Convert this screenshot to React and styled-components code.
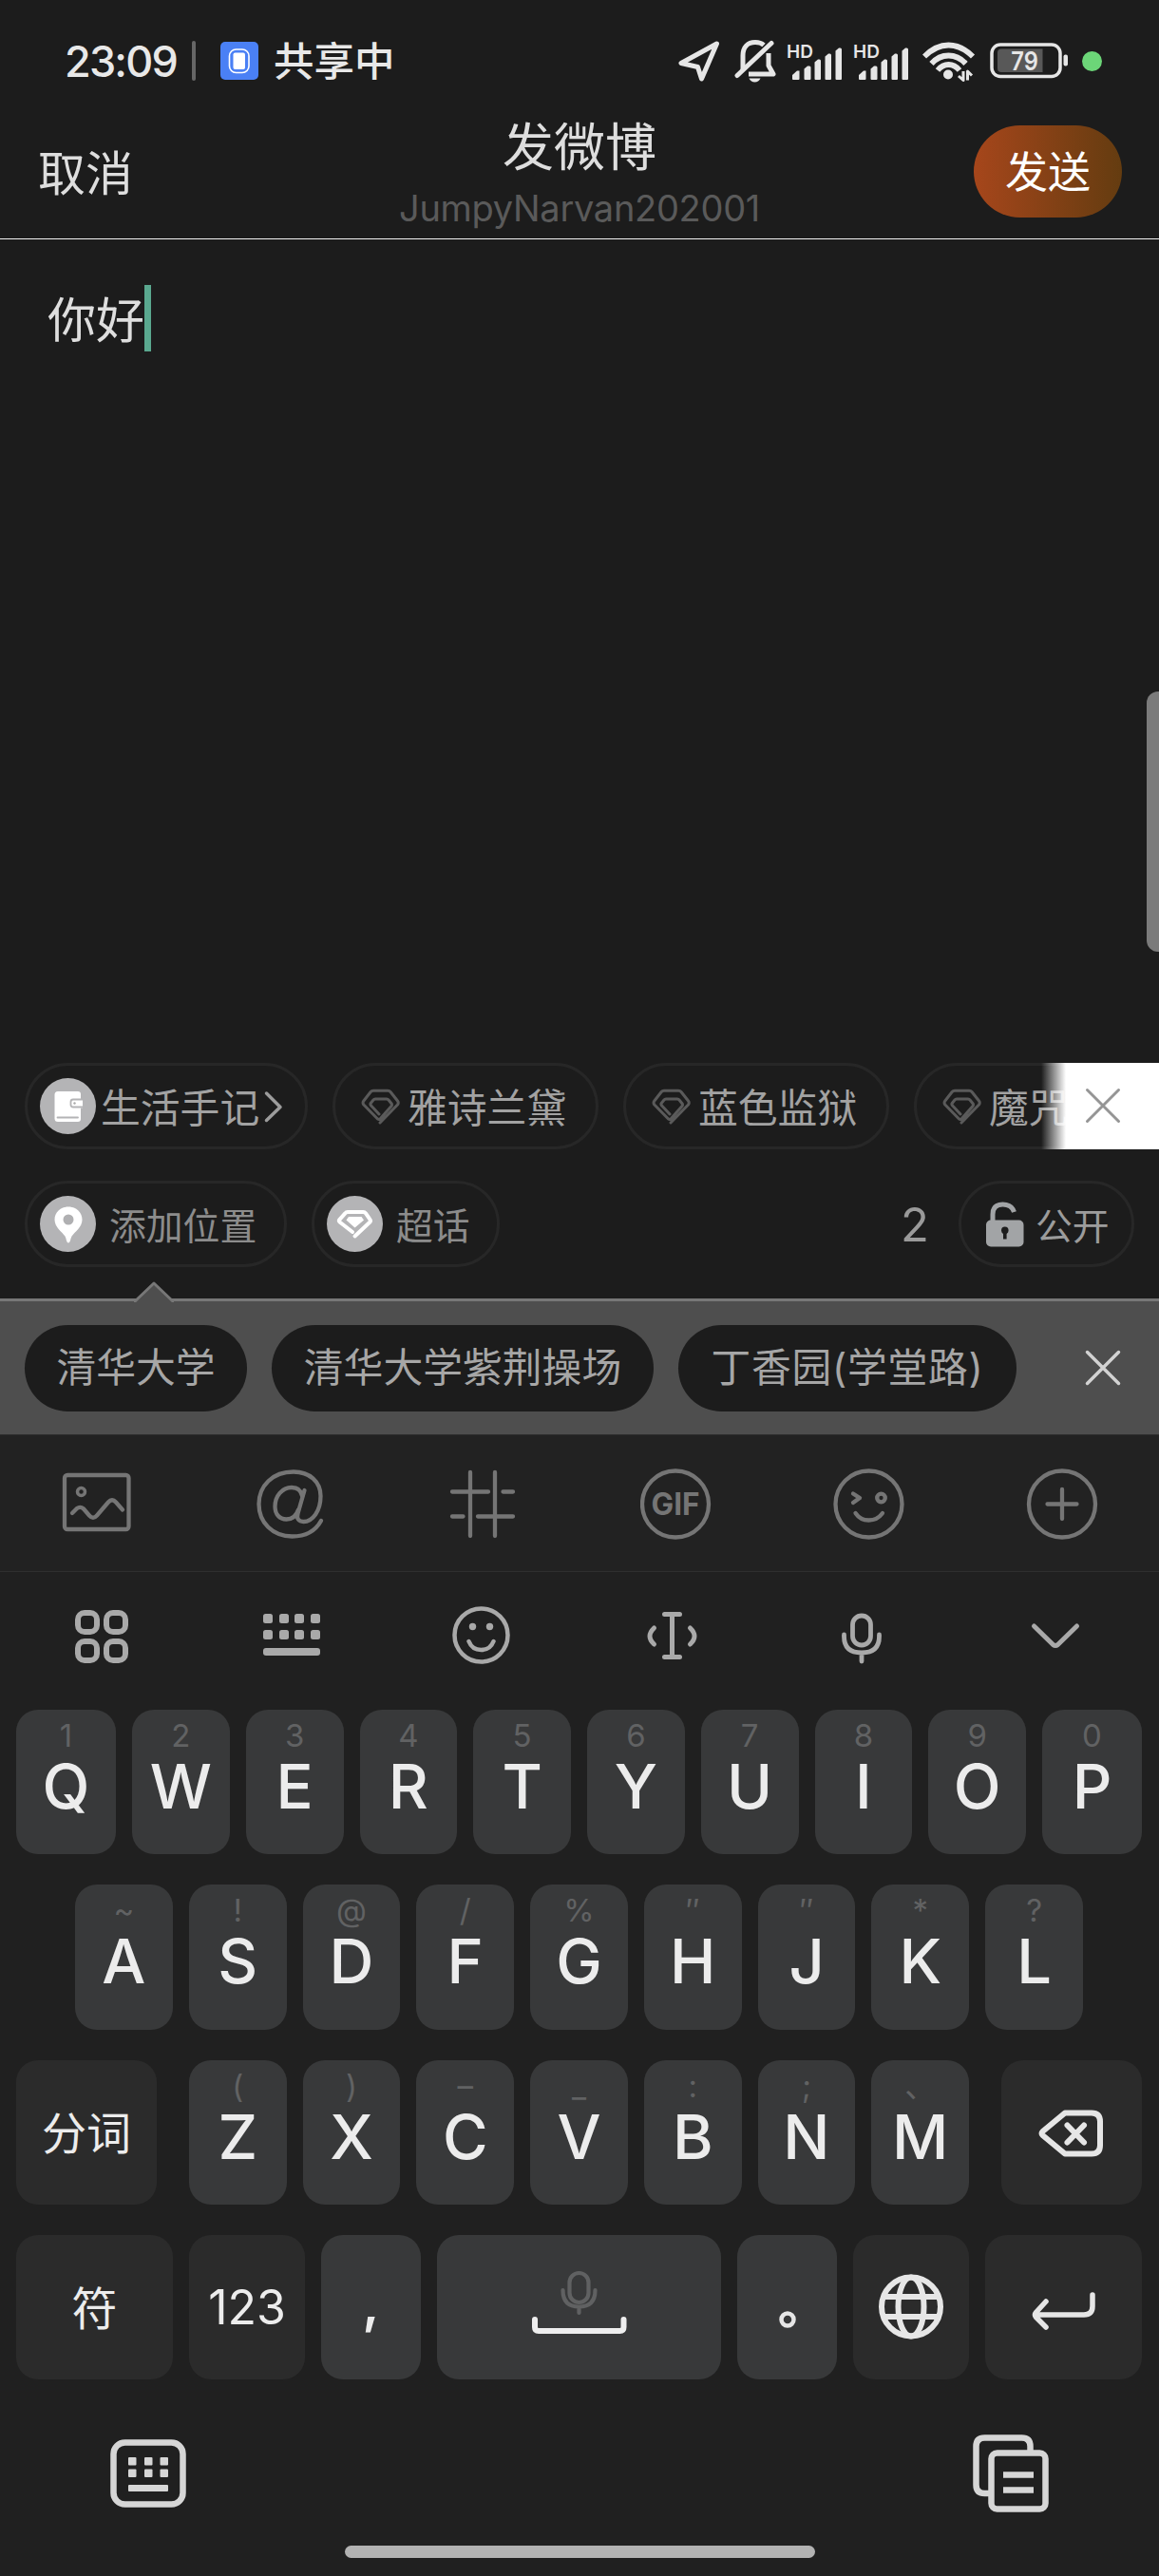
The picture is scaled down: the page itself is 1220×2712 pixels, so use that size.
import React from "react";
import styled, { createGlobalStyle } from "styled-components";

const GlobalStyle = createGlobalStyle`
  * { box-sizing: border-box; }
  body {
    margin: 0;
    background: #1c1c1c;
    font-family: Inter, "Noto Sans CJK SC", sans-serif;
  }
`;

const Screen = styled.main`
  width: 1220px;
  height: 2712px;
  display: flex;
  flex-direction: column;
  overflow: hidden;
  background: #1c1c1c;
  color: #dedede;
  white-space: nowrap;
`;

/* ---------- icons ---------- */

const IconSvg = styled.svg`
  display: block;
  flex: none;
  width: ${(p) => p.$w}px;
  height: ${(p) => p.$h}px;
  fill: none;
  stroke: ${(p) => p.$color || "#e6e6e6"};
  stroke-width: ${(p) => p.$stroke || 5};
  stroke-linecap: round;
  stroke-linejoin: round;
`;

const Icon = ({ w, h, color, stroke, children }) => (
  <IconSvg $w={w} $h={h} $color={color} $stroke={stroke} viewBox={`0 0 ${w} ${h}`}>
    {children}
  </IconSvg>
);

const SvgLabel = styled.text`
  font-family: Inter, sans-serif;
  font-size: ${(p) => p.$size}px;
  font-weight: ${(p) => p.$weight || 500};
  text-anchor: middle;
  fill: ${(p) => p.$color};
  stroke: none;
`;

const LocationArrow = () => (
  <Icon w={44} h={46}>
    <path d="M40.500 5L3 25.500l17.500 4L24.500 42z" />
  </Icon>
);

const BellOff = () => (
  <Icon w={44} h={46}>
    <path d="M9 33V17.500C9 8.500 14 3.500 22 3.500c4 0 7 1.200 9 3" strokeLinecap="butt" />
    <path d="M39 4.500L3 38.500" />
    <path d="M36 15v13l5 9H15" strokeLinecap="butt" />
    <path d="M15.500 41.500h12q-2 4-6 4t-6-4z" fill="#e6e6e6" stroke="none" />
  </Icon>
);

const Signal = () => (
  <Icon w={60} h={42}>
    <SvgLabel x="14" y="18" $size={19} $weight={600} $color="#e6e6e6">HD</SvgLabel>
    <g fill="#e6e6e6" stroke="none">
      <path d="M6 40v-4l5-4.500h2.500V40q0 1-1 1H7q-1 0-1-1z" />
      <path d="M18.500 40V29.500l3.500-3h2q1.500 0 1.500 1.500v12q0 1-1 1h-5q-1 0-1-1z" />
      <path d="M29.500 40V22.500l3.500-3h1.500q1.500 0 1.500 1.500v19q0 1-1 1h-4.500q-1 0-1-1z" />
      <path d="M40.500 40V16.500l3.500-3h1.500q1.500 0 1.500 1.500v25q0 1-1 1h-4.500q-1 0-1-1z" />
      <path d="M51.500 40V10.500l3.500-3h1.500q1.500 0 1.500 1.500v31q0 1-1 1h-4.500q-1 0-1-1z" />
    </g>
  </Icon>
);

const Wifi = () => (
  <Icon w={56} h={44} stroke={5.800}>
    <g strokeLinecap="butt">
      <path d="M2 17.500Q14 5.500 27.500 5.500T53 17.500" />
      <path d="M9.500 25Q17 16.500 27.500 16.500T45.500 25" />
      <path d="M16 32Q21 26 27.500 26T39 32" />
    </g>
    <circle cx="27" cy="36.500" r="5" fill="#e6e6e6" stroke="none" />
    <path d="M43 33v9.500l-5-4.500M47.500 42.500V33l4.500 4.500" strokeWidth="3" strokeLinecap="butt" />
  </Icon>
);

const Battery = () => (
  <Icon w={84} h={38} stroke={3.500}>
    <rect x="2" y="2" width="72" height="33.500" rx="9" />
    <path d="M12 6.500h43.500V31H12q-4 0-4-4V10.500q0-4 4-4z" fill="#585858" stroke="none" />
    <rect x="77.500" y="12.500" width="4.500" height="12" rx="2" fill="#e6e6e6" stroke="none" />
    <SvgLabel x="36.500" y="28.500" textLength="28.500" lengthAdjust="spacingAndGlyphs" $size={27.500} $weight={600} $color="#e6e6e6">79</SvgLabel>
  </Icon>
);

const ShareBadge = () => (
  <Icon w={40} h={40} stroke={1.600} color="#ffffff">
    <rect width="40" height="40" rx="5" fill="#4a80f5" stroke="none" />
    <rect x="9.500" y="8" width="20.500" height="24.500" rx="7" />
    <rect x="13.500" y="11.500" width="12.500" height="17.500" rx="2" fill="#fff" stroke="none" />
  </Icon>
);

const Gem = () => (
  <Icon w={42} h={38} color="#5a5a5a" stroke={3}>
    <path d="M20 36L38.500 17q1.500-2 0-4l-7.500-9.500q-1-1.300-2.800-1.300H13q-1.800 0-2.800 1.300L2.800 13q-1.500 2 0 4l14.700 15q1.500 1 3-.4L32 18.500q1-1.500 0-2.800l-3-3.700q-.8-1-2-1H15q-1.200 0-2 1l-2.600 3.200q-1 1.300 0 2.600L19 27" />
  </Icon>
);

const NotebookIcon = () => (
  <Icon w={59} h={59} stroke={2.500} color="#b4b4b6">
    <path d="M19 14h21q3 0 3 3v5.500h2v9h-2V43q0 3-3 3H19q-3.500 0-3.500-3.500v-25Q15.500 14 19 14z" fill="#fff" stroke="none" />
    <path d="M45 22.500H35q-2.500 0-2.500 2.500v3q0 2.500 2.500 2.500h10M18.500 41.500H40" strokeWidth="1.800" />
    <circle cx="36.500" cy="26.500" r="1.200" fill="#aaa" stroke="none" />
  </Icon>
);

const PinIcon = () => (
  <Icon w={59} h={59}>
    <path d="M30 11.500c8.500 0 14.500 6 14.500 13.500 0 8-7.500 12.500-11 17.500-1.500 3-1.500 7-3.500 7s-2-4-3.500-7C23 37.500 15.500 33 15.500 25c0-7.500 6-13.500 14.500-13.500z" fill="#fff" stroke="none" />
    <circle cx="30" cy="25" r="5.500" fill="#b0b0b2" stroke="none" />
  </Icon>
);

const GemBadgeIcon = () => (
  <Icon w={59} h={59} color="#fff" stroke={4}>
    <path d="M29.500 42.500L45.500 27.500q1-1.300 0-2.600l-4.500-6.500q-1-1.400-2.700-1.400H22q-1.700 0-2.700 1.400l-5.800 6.500q-1.200 1.300 0 2.600L27 38" />
    <path d="M23 22h13.500l2.500 3.500-9.500 8-9-8z" fill="#fff" stroke="none" />
  </Icon>
);

const UnlockIcon = () => (
  <Icon w={42} h={48} color="#a2a4a6">
    <path d="M8 22V13.500Q8 3 18.500 3q9.500 0 12 8" strokeLinecap="butt" />
    <rect x="1" y="19.500" width="39.500" height="28" rx="5" fill="#a2a4a6" stroke="none" />
    <path d="M17 30.500q0-4 3.800-4t3.800 4q0 2-2 3.500v5.500h-3.600V34q-2-1.500-2-3.500z" fill="#1c1c1c" stroke="none" />
  </Icon>
);

const Cross = ({ color, stroke = 3 }) => (
  <Icon w={38} h={38} color={color} stroke={stroke}>
    <path d="M2.500 2.500l33 33M35.500 2.500l-33 33" />
  </Icon>
);

const ImageIcon = () => (
  <Icon w={76} h={76} color="#757575" stroke={4.300}>
    <rect x="4" y="8" width="67.500" height="57" rx="3" />
    <circle cx="21.500" cy="25.500" r="4" strokeWidth="3.500" />
    <path d="M12 48l5-5q3.500-2.500 7 .5l6 7q4 4.500 8 0L50 36.500q4-4.500 8 0L65 44.500" />
  </Icon>
);

const AtIcon = () => (
  <Icon w={76} h={76} color="#757575" stroke={4.300}>
    <path d="M71 56C65 67 54 72.500 40.500 72.500C20 72.500 5.500 58 5.500 38.500S20 4.500 42 4.500C59 4.500 70.500 15 70.500 30C70.500 46 62 57 52.500 57C47.500 57 45 54 46.500 48.500L53.500 24" />
    <path d="M51 30c-1-6-5-9-11-9-10 0-17.500 9-17.500 20 0 8 4.500 13.500 12 13.500 6 0 10.500-4 12.500-10" />
  </Icon>
);

const HashIcon = () => (
  <Icon w={76} h={76} color="#757575" stroke={4.300}>
    <path d="M25 5v67M51 5v67M6 25.500h38M59.500 25.500H70M6 51.500h11.500M33 51.500h37" />
  </Icon>
);

const GifIcon = () => (
  <Icon w={76} h={76} color="#757575" stroke={4.300}>
    <circle cx="37" cy="38.500" r="35" />
    <SvgLabel x="37" y="49.500" textLength="51" lengthAdjust="spacingAndGlyphs" $size={32} $weight={700} $color="#757575">GIF</SvgLabel>
  </Icon>
);

const WinkIcon = () => (
  <Icon w={76} h={76} color="#757575" stroke={4.300}>
    <circle cx="37.500" cy="38.500" r="35" />
    <path d="M21 27.500l7 4.500-7 5M23.500 48q5 7.500 14 7.500T52 48" />
    <circle cx="50.500" cy="32" r="4.300" />
  </Icon>
);

const PlusIcon = () => (
  <Icon w={76} h={76} color="#757575" stroke={4.300}>
    <circle cx="38" cy="38.500" r="35" />
    <path d="M38 23v31M22.500 38.500h31" />
  </Icon>
);

const AppsIcon = () => (
  <Icon w={64} h={64} color="#a9a9a9" stroke={6}>
    <rect x="7" y="7" width="20" height="20" rx="7" />
    <rect x="37" y="7" width="20" height="20" rx="7" />
    <rect x="7" y="37" width="20" height="20" rx="7" />
    <rect x="37" y="37" width="20" height="20" rx="7" />
  </Icon>
);

const KeyboardDots = () => (
  <Icon w={64} h={64}>
    <g fill="#a9a9a9" stroke="none">
      {[8, 25].map((y) => [2, 19, 35, 52].map((x) => (
        <rect key={`${x}-${y}`} x={x} y={y} width="10" height="10" rx="2.500" />
      )))}
      <rect x="2" y="44" width="60" height="8" rx="3" />
    </g>
  </Icon>
);

const SmileIcon = () => (
  <Icon w={64} h={64} color="#a9a9a9" stroke={4.500}>
    <circle cx="31.500" cy="30.500" r="28" />
    <path d="M18.500 37q3.500 9 13 9t13-9" />
    <circle cx="22.500" cy="21.500" r="3.700" fill="#a9a9a9" stroke="none" />
    <circle cx="40.500" cy="21.500" r="3.700" fill="#a9a9a9" stroke="none" />
  </Icon>
);

const CursorMove = () => (
  <Icon w={64} h={64} color="#a9a9a9" stroke={5}>
    <path d="M23.500 8.500h16M23.500 53.500h16M31.500 8.500v45" />
    <path d="M12.500 23q-9 8.500 0 17M50.500 23q9 8.500 0 17" />
  </Icon>
);

const MicIcon = () => (
  <Icon w={64} h={64} color="#a9a9a9" stroke={4.800}>
    <rect x="21.500" y="10" width="19" height="31" rx="9.500" />
    <path d="M12.500 30v2q0 17 18.500 17T49.500 32v-2M31 50v8" />
  </Icon>
);

const ChevronDown = () => (
  <Icon w={64} h={64} color="#a9a9a9" stroke={5}>
    <path d="M12.500 21l20 19.500q2.500 2 5 0L57.500 21" />
  </Icon>
);

const ChevronRight = () => (
  <Icon w={20} h={34} color="#9c9c9c" stroke={3.500}>
    <path d="M2.500 3l14.500 14.500L2.500 31.500" />
  </Icon>
);

const Backspace = () => (
  <Icon w={72} h={52} stroke={6}>
    <path d="M29 5.500h28q9 0 9 9v25q0 9-9 9H29L5.500 29q-2-2 0-4z" />
    <path d="M31.500 18.500l17.500 18M49 18.500L31.500 36.500" />
  </Icon>
);

const SpaceGlyph = () => (
  <Icon w={104} h={80} color="#eeeeee" stroke={6}>
    <g stroke="#606162" strokeWidth="4.200">
      <rect x="41.500" y="4" width="20" height="31" rx="10" />
      <path d="M34.500 22q0 17.500 17 17.500t17-17.500M51.500 41v5" />
    </g>
    <path d="M5 53v8q0 4 4 4h85.500q4 0 4-4v-8" />
  </Icon>
);

const PeriodGlyph = () => (
  <Icon w={20} h={20} stroke={4.500}>
    <circle cx="10" cy="10" r="6.500" />
  </Icon>
);

const GlobeIcon = () => (
  <Icon w={70} h={70} stroke={6}>
    <circle cx="35" cy="34.500" r="31" />
    <ellipse cx="35" cy="34.500" rx="13.500" ry="31" />
    <path d="M7 24h56M7 45h56" strokeLinecap="butt" />
  </Icon>
);

const EnterIcon = () => (
  <Icon w={70} h={42} stroke={5.500}>
    <path d="M65 4v12q0 9-9 9H5M16 11L5.500 22.500q-2 2.500 0 5L16 38" />
  </Icon>
);

const KeyboardSwitch = () => (
  <Icon w={80} h={72} color="#d6d6d6" stroke={6.500}>
    <rect x="3.500" y="3.500" width="73" height="65" rx="12" />
    <g fill="#d6d6d6" stroke="none">
      {[19, 31.500].map((y) => [19, 36, 52.500].map((x) => (
        <rect key={`${x}-${y}`} x={x} y={y} width="8.500" height="8.500" rx="1" />
      )))}
      <rect x="19" y="48" width="42" height="7" rx="1" />
    </g>
  </Icon>
);

const ClipboardIcon = () => (
  <Icon w={80} h={82} color="#d6d6d6" stroke={6.500}>
    <g strokeLinecap="butt">
      <path d="M60.500 18v-5.500q0-9-9-9H12.500q-9 0-9 9v40.500q0 9 9 9H17" />
      <rect x="19.500" y="19.500" width="57" height="59" rx="6" />
      <path d="M32 42.500h32M32 58.500h32" />
    </g>
  </Icon>
);

/* ---------- status bar and header ---------- */

const StatusBar = styled.div`
  height: 128px;
  flex: none;
  display: flex;
  align-items: center;
  padding: 0 60px 0 68px;
  color: #e8e8e8;
`;

const Clock = styled.span`
  width: 134px;
  font-size: 45px;
  font-weight: 500;
  letter-spacing: -1.800px;
`;

const StatusDivider = styled.span`
  width: 4px;
  height: 42px;
  margin-right: 26px;
  background: #666;
  border-radius: 2px;
`;

const SharingText = styled.span`
  margin-left: 16px;
  padding-bottom: 5px;
  font-size: 42.500px;
  font-weight: 500;
`;

const StatusIcons = styled.div`
  margin-left: auto;
  display: flex;
  align-items: center;
`;

const Slot = styled.div`
  margin-left: ${(p) => p.$gap}px;
`;

const GreenDot = styled.span`
  width: 21px;
  height: 21px;
  margin-left: 13px;
  border-radius: 50%;
  background: #6cd678;
`;

const Header = styled.header`
  height: 124px;
  flex: none;
  display: grid;
  grid-template-columns: 1fr auto 1fr;
  border-bottom: 1px solid #f2f2f2;
`;

const Cancel = styled.button`
  justify-self: start;
  margin: 30px 0 0 40px;
  padding: 0;
  height: 50px;
  border: 0;
  background: none;
  color: #dedede;
  font: 400 50px/50px Inter, "Noto Sans CJK SC", sans-serif;
`;

const TitleBlock = styled.div`
  display: flex;
  flex-direction: column;
  align-items: center;
`;

const Title = styled.h1`
  margin: 1px 0 0;
  font-size: 54px;
  font-weight: 400;
  line-height: 54px;
`;

const Account = styled.span`
  margin-top: 15px;
  color: #5a5a5a;
  font-size: 38px;
  letter-spacing: -0.300px;
  line-height: 42px;
`;

const Send = styled.button`
  justify-self: end;
  width: 156px;
  height: 97px;
  margin: 4px 39px 0 0;
  padding: 2px 0 0;
  border: 0;
  border-radius: 49px;
  background: linear-gradient(90deg, #a6461b, #643c10);
  color: #fff;
  font: 400 45px/95px Inter, "Noto Sans CJK SC", sans-serif;
`;

/* ---------- editor ---------- */

const Editor = styled.section`
  position: relative;
  flex: 1;
  display: flex;
  align-items: flex-start;
  padding: 48px 0 0 50px;
  font-size: 51px;
  line-height: 75px;
`;

const Caret = styled.span`
  width: 7px;
  height: 70px;
  background: #5aa88f;
`;

const ScrollThumb = styled.div`
  position: absolute;
  top: 476px;
  right: 0;
  width: 13px;
  height: 274px;
  border-radius: 12px 0 0 12px;
  background: #7b7b7b;
`;

/* ---------- chips ---------- */

const ChipRow = styled.div`
  position: relative;
  flex: none;
  height: 91px;
  margin-bottom: 33px;
  padding: 0 26px;
  display: flex;
  gap: 26px;
  overflow: hidden;
`;

const Chip = styled.div`
  flex: none;
  display: flex;
  align-items: center;
  width: ${(p) => p.$width}px;
  height: 91px;
  padding-left: ${(p) => p.$inset}px;
  gap: ${(p) => p.$gap}px;
  border: 3px solid #272727;
  border-radius: 46px;
  color: ${(p) => p.$color || "#a2a2a2"};
  font-size: ${(p) => p.$size || 41.800}px;
`;

const ChipText = styled.span`
  padding-bottom: 2px;
`;

const Disc = styled.span`
  width: 59px;
  height: 59px;
  flex: none;
  border-radius: 50%;
  background: #b4b4b6;
`;

const DismissTopics = styled.div`
  position: absolute;
  top: 0;
  right: 0;
  width: 124px;
  height: 91px;
  padding: 26px 0 0 46px;
  background: linear-gradient(90deg, rgba(255, 255, 255, 0), #fff 26px);
`;

const Count = styled.span`
  margin: 0 5px 0 auto;
  color: #9a9a9a;
  font-size: 49px;
  line-height: 94px;
`;

/* ---------- suggested places ---------- */

const PlacePanel = styled.div`
  position: relative;
  flex: none;
  height: 143px;
  padding: 25px 26px 0;
  display: flex;
  gap: 26px;
  background: #4e4e4e;
  border-top: 3px solid #777;
`;

const Pointer = styled.div`
  position: absolute;
  top: -21px;
  left: 141px;
`;

const Place = styled.div`
  width: ${(p) => p.$width}px;
  height: 91px;
  border-radius: 46px;
  background: #1c1c1c;
  color: #a6a6a6;
  font-size: 41.800px;
  line-height: 91px;
  text-align: center;
  letter-spacing: ${(p) => p.$spacing || 0}px;
`;

const ClosePlaces = styled.div`
  margin: 26px 14px 0 auto;
`;

/* ---------- toolbars and keyboard ---------- */

const ComposeTools = styled.div`
  flex: none;
  height: 145px;
  display: grid;
  grid-template-columns: repeat(6, 1fr);
  place-items: center;
  background: #222;
  border-top: 1px solid #2d2d2d;
  border-bottom: 1px solid #2f2f2f;
`;

const Keyboard = styled.section`
  flex: none;
  height: 1057px;
  display: flex;
  flex-direction: column;
  background: #202020;
`;

const KeyboardTools = styled.div`
  height: 145px;
  padding: 0 12px 9px 7px;
  display: grid;
  grid-template-columns: repeat(6, 1fr);
  place-items: center;
`;

const Rows = styled.div`
  display: flex;
  flex-direction: column;
  gap: 32px;
`;

const Row = styled.div`
  display: flex;
  gap: 17px;
  padding: 0 ${(p) => (p.$indent ? 80 : 18)}px 0 ${(p) => (p.$indent ? 79 : 17)}px;
`;

const KeyCap = styled.div`
  height: 152.300px;
  border-radius: 23px;
  background: ${(p) => (p.$dim ? "#2b2b2b" : "#38393a")};
  color: #ececec;
  ${(p) => (p.$width ? `flex: none; width: ${p.$width}px;` : "flex: 1;")}
  margin-left: ${(p) => p.$ml || 0}px;
  margin-right: ${(p) => p.$mr || 0}px;
  padding-bottom: ${(p) => p.$lift || 0}px;
  display: flex;
  flex-direction: column;
  align-items: center;
  justify-content: ${(p) => (p.$letter ? "flex-start" : "center")};
  font-size: ${(p) => p.$size || 46}px;
  font-weight: ${(p) => p.$weight || 400};
`;

const Hint = styled.span`
  margin-top: 7px;
  height: 40px;
  color: #616263;
  font-size: 33px;
  line-height: 40px;
`;

const Letter = styled.span`
  height: 68px;
  font-size: 65px;
  font-weight: 500;
  line-height: 68px;
`;

const PunctSlot = styled.div`
  padding-top: ${(p) => p.$top}px;
`;

const LetterKey = ({ hint, label, width }) => (
  <KeyCap $letter $width={width}>
    <Hint>{hint}</Hint>
    <Letter>{label}</Letter>
  </KeyCap>
);

const BottomBar = styled.div`
  flex: 1;
  padding: 58px 116px 0;
  display: flex;
  justify-content: space-between;
  align-items: flex-start;
`;

const HomeArea = styled.div`
  height: 32px;
  display: flex;
  justify-content: center;
`;

const HomeBar = styled.span`
  width: 495px;
  height: 13px;
  border-radius: 7px;
  background: #b2b2b2;
`;

const ROW1 = [["1", "Q"], ["2", "W"], ["3", "E"], ["4", "R"], ["5", "T"], ["6", "Y"], ["7", "U"], ["8", "I"], ["9", "O"], ["0", "P"]];
const ROW2 = [["~", "A"], ["!", "S"], ["@", "D"], ["/", "F"], ["%", "G"], ["″", "H"], ["″", "J"], ["*", "K"], ["?", "L"]];
const ROW3 = [["(", "Z"], [")", "X"], ["–", "C"], ["_", "V"], [":", "B"], [";", "N"], ["、", "M"]];
const PLACES = [
  { name: "清华大学", width: 234 },
  { name: "清华大学紫荆操场", width: 402 },
  { name: "丁香园(学堂路)", width: 356, spacing: 0.7 },
];

export default function App() {
  return (
    <Screen>
      <GlobalStyle />
      <StatusBar>
        <Clock>23:09</Clock>
        <StatusDivider />
        <ShareBadge />
        <SharingText>共享中</SharingText>
        <StatusIcons>
          <LocationArrow />
          <Slot $gap={15}><BellOff /></Slot>
          <Slot $gap={11}><Signal /></Slot>
          <Slot $gap={10}><Signal /></Slot>
          <Slot $gap={13}><Wifi /></Slot>
          <Slot $gap={15}><Battery /></Slot>
          <GreenDot />
        </StatusIcons>
      </StatusBar>

      <Header>
        <Cancel>取消</Cancel>
        <TitleBlock>
          <Title>发微博</Title>
          <Account>JumpyNarvan202001</Account>
        </TitleBlock>
        <Send>发送</Send>
      </Header>

      <Editor>
        <span>你好</span>
        <Caret />
        <ScrollThumb />
      </Editor>

      <ChipRow>
        <Chip $width={298} $inset={13} $gap={5}>
          <Disc><NotebookIcon /></Disc>
          <ChipText>生活手记</ChipText>
          <ChevronRight />
        </Chip>
        {["雅诗兰黛", "蓝色监狱", "魔咒"].map((name) => (
          <Chip key={name} $width={280} $inset={27} $gap={7}>
            <Gem />
            <ChipText>{name}</ChipText>
          </Chip>
        ))}
        <DismissTopics><Cross color="#959595" /></DismissTopics>
      </ChipRow>

      <ChipRow>
        <Chip $width={276} $inset={13} $gap={14} $size={38.800} $color="#8c8c8c">
          <Disc><PinIcon /></Disc>
          <ChipText>添加位置</ChipText>
        </Chip>
        <Chip $width={198} $inset={13} $gap={14} $size={38.800} $color="#8c8c8c">
          <Disc><GemBadgeIcon /></Disc>
          <ChipText>超话</ChipText>
        </Chip>
        <Count>2</Count>
        <Chip $width={185} $inset={25} $gap={11} $size={38.800} $color="#9c9c9c">
          <UnlockIcon />
          <ChipText>公开</ChipText>
        </Chip>
      </ChipRow>

      <PlacePanel>
        <Pointer>
          <Icon w={42} h={22} color="#777" stroke={3}>
            <path d="M1 21L21 2l20 19" fill="#4e4e4e" />
          </Icon>
        </Pointer>
        {PLACES.map(({ name, width, spacing }) => (
          <Place key={name} $width={width} $spacing={spacing}>{name}</Place>
        ))}
        <ClosePlaces><Cross color="#d2d2d2" stroke={3.500} /></ClosePlaces>
      </PlacePanel>

      <ComposeTools>
        <ImageIcon />
        <AtIcon />
        <HashIcon />
        <GifIcon />
        <WinkIcon />
        <PlusIcon />
      </ComposeTools>

      <Keyboard>
        <KeyboardTools>
          <AppsIcon />
          <KeyboardDots />
          <SmileIcon />
          <CursorMove />
          <MicIcon />
          <ChevronDown />
        </KeyboardTools>
        <Rows>
          <Row>
            {ROW1.map(([hint, label], i) => (
              <LetterKey key={label} hint={hint} label={label} width={i === 0 || i === 9 ? 105 : 0} />
            ))}
          </Row>
          <Row $indent>
            {ROW2.map(([hint, label]) => <LetterKey key={label} hint={hint} label={label} />)}
          </Row>
          <Row>
            <KeyCap $dim $width={148} $mr={17} $size={47} $lift={4}>分词</KeyCap>
            {ROW3.map(([hint, label]) => <LetterKey key={label} hint={hint} label={label} />)}
            <KeyCap $dim $width={148} $ml={17}><Backspace /></KeyCap>
          </Row>
          <Row>
            <KeyCap $dim $width={165} $size={48} $lift={5}>符</KeyCap>
            <KeyCap $dim $width={122} $size={50}>123</KeyCap>
            <KeyCap $width={105} $size={56} $weight={600} $lift={8}>,</KeyCap>
            <KeyCap><SpaceGlyph /></KeyCap>
            <KeyCap $width={105}><PunctSlot $top={26}><PeriodGlyph /></PunctSlot></KeyCap>
            <KeyCap $dim $width={122}><GlobeIcon /></KeyCap>
            <KeyCap $dim $width={165}><PunctSlot $top={8}><EnterIcon /></PunctSlot></KeyCap>
          </Row>
        </Rows>
        <BottomBar>
          <PunctSlot $top={5}><KeyboardSwitch /></PunctSlot>
          <ClipboardIcon />
        </BottomBar>
        <HomeArea><HomeBar /></HomeArea>
      </Keyboard>
    </Screen>
  );
}
